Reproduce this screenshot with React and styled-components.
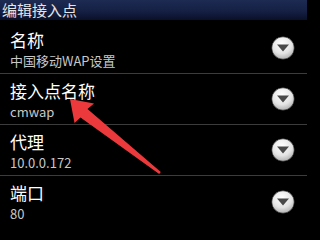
import React from 'react'
import styled, { createGlobalStyle } from 'styled-components'

const GlobalStyle = createGlobalStyle`
  html, body {
    margin: 0;
    padding: 0;
    background: #000;
  }
  body {
    font-family: "Noto Sans CJK SC", "Noto Sans", sans-serif;
  }
`

const Screen = styled.div`
  position: relative;
  width: 307px;
  height: 223px;
  overflow: hidden;
  background: #000;
`

const TitleBar = styled.div`
  height: 20px;
  display: flex;
  align-items: center;
  padding-left: 2px;
  background: linear-gradient(180deg, #1d2a52 0%, #152044 55%, #0a1028 100%);
  color: #e6e6e6;
  font-size: 15px;
  line-height: 20px;
`

const List = styled.div`
  display: flex;
  flex-direction: column;
  padding-top: 3px;
`

const Row = styled.div`
  height: 51px;
  box-sizing: border-box;
  display: flex;
  align-items: center;
  padding: 0 12px 0 10px;
  border-bottom: 1px solid #3c3c3c;
  &:last-child {
    border-bottom: none;
  }
`

const Texts = styled.div`
  flex: 1;
  display: flex;
  flex-direction: column;
  align-self: flex-start;
  padding-top: 7px;
`

const Title = styled.div`
  color: #fff;
  font-size: 17px;
  line-height: 20px;
`

const Summary = styled.div`
  margin-top: 3px;
  color: #c8c8c8;
  font-size: 13px;
  line-height: 16px;
`

const Overlay = styled.svg`
  position: absolute;
  left: 0;
  top: 0;
  pointer-events: none;
`

function DropButton() {
  return (
    <svg width="24" height="24" viewBox="0 0 24 24">
      <defs>
        <radialGradient id="knob" cx="45%" cy="30%" r="75%">
          <stop offset="0%" stopColor="#ffffff" />
          <stop offset="60%" stopColor="#e4e4e4" />
          <stop offset="100%" stopColor="#a8a8a8" />
        </radialGradient>
      </defs>
      <circle cx="12" cy="12" r="11.2" fill="url(#knob)" stroke="#2a2a2a" strokeWidth="0.6" />
      <path d="M6 8.6 L18 8.6 L12 15.6 Z" fill="#4a4a4a" />
    </svg>
  )
}

const items = [
  { title: '名称', value: '中国移动WAP设置' },
  { title: '接入点名称', value: 'cmwap' },
  { title: '代理', value: '10.0.0.172' },
  { title: '端口', value: '80' },
]

export default function App() {
  return (
    <Screen>
      <GlobalStyle />
      <TitleBar>编辑接入点</TitleBar>
      <List>
        {items.map(item => (
          <Row key={item.title}>
            <Texts>
              <Title>{item.title}</Title>
              <Summary>{item.value}</Summary>
            </Texts>
            <DropButton />
          </Row>
        ))}
      </List>
      <Overlay width="307" height="223" viewBox="0 0 307 223">
        <polygon
          points="70,99 94,103.5 87.5,109 160.8,172 159.2,174 80.5,117.5 74.5,123"
          fill="#ec3a3c"
        />
      </Overlay>
    </Screen>
  )
}
